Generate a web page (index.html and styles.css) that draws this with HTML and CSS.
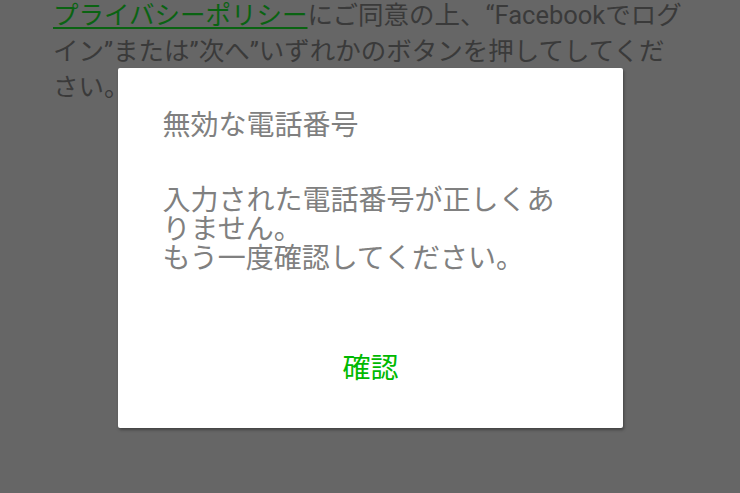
FILE: index.html
```html
<!DOCTYPE html>
<html lang="ja">
<head>
  <meta charset="UTF-8" />
  <meta name="viewport" content="width=device-width, initial-scale=1.0"/>
  <title>電話番号の確認</title>
  <link rel="stylesheet" href="styles.css">
</head>
<body>

  <div class="page">
    <p class="terms">
      <a href="#" class="terms-link">プライバシーポリシー</a>にご同意の上、“Facebookでログ<br>イン”または”次へ”いずれかのボタンを押してしてくだ<br>さい。
    </p>
  </div>

  <div class="overlay">
    <div class="dialog">
      <h3 class="dialog-title">無効な電話番号</h3>
      <p class="dialog-message">入力された電話番号が正しくありません。<br>もう一度確認してください。</p>
      <button class="dialog-button" type="button">確認</button>
    </div>
  </div>

</body>
</html>
```

FILE: styles.css
```css
:root {
  --overlay: #666666;
  --dim-text: #3a3a3a;
  --dim-green: #0a6312;
  --line-green: #00b900;
  --gray: #808080;
}

* {
  box-sizing: border-box;
  margin: 0;
  padding: 0;
}

body {
  font-family: Roboto, "Noto Sans CJK JP", sans-serif;
  background: var(--overlay);
  width: 740px;
  height: 493px;
  overflow: hidden;
  position: relative;
}

.page {
  padding: 0 0 0 53px;
}

.terms {
  margin-top: -3px;
  font-size: 25.5px;
  line-height: 36px;
  color: var(--dim-text);
  white-space: nowrap;
}

.terms-link {
  color: var(--dim-green);
  text-decoration: underline;
  text-decoration-thickness: 2px;
  text-underline-offset: 3px;
}

.overlay {
  position: absolute;
  inset: 0;
  display: flex;
  justify-content: center;
  align-items: flex-start;
  padding-top: 68px;
}

.dialog {
  width: 505px;
  height: 360px;
  background: #fff;
  border-radius: 2px;
  box-shadow: 1px 2px 3px rgba(0, 0, 0, 0.35);
  display: flex;
  flex-direction: column;
  padding: 43px 44px 29px 45px;
  color: var(--gray);
}

.dialog-title {
  font-size: 28px;
  line-height: 29px;
  font-weight: normal;
}

.dialog-message {
  margin-top: 46px;
  font-size: 28px;
  line-height: 29px;
}

.dialog-button {
  margin-top: auto;
  align-self: center;
  height: 60px;
  padding: 0 10px;
  background: none;
  border: none;
  font-family: inherit;
  font-size: 28px;
  line-height: 60px;
  color: var(--line-green);
  cursor: pointer;
}
```
